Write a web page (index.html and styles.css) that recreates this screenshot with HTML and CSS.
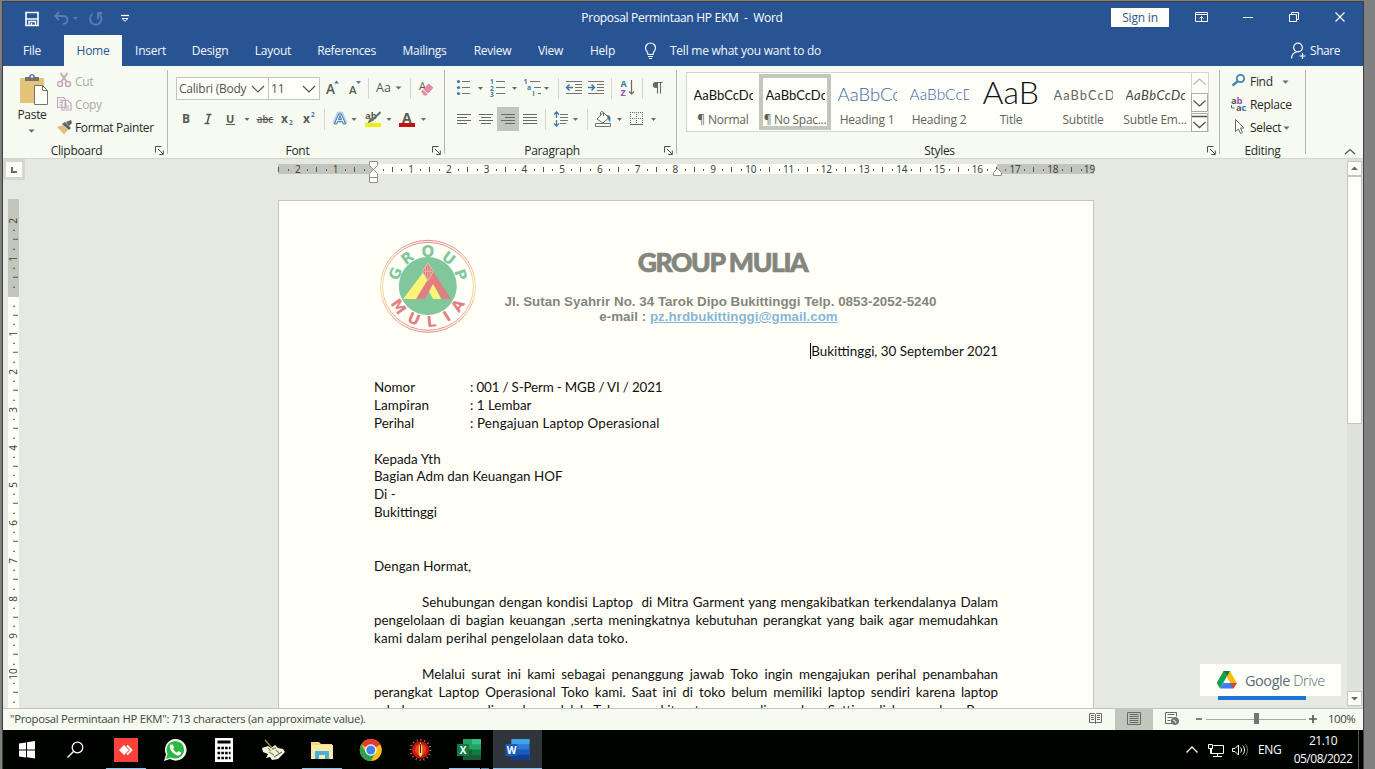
FILE: index.html
```html
<!DOCTYPE html>
<html lang="id">
<head>
<meta charset="utf-8">
<title>Proposal Permintaan HP EKM - Word</title>
<link rel="stylesheet" href="styles.css">
</head>
<body>
<svg width="0" height="0" class="defs" aria-hidden="true">
  <defs>
    <symbol id="caret" viewBox="0 0 7 4"><path d="M.5 .5h6L3.500 3.700z" fill="#666b63"/></symbol>
    <symbol id="launcher" viewBox="0 0 9 9"><path d="M.5 6.500v-6h6" fill="none" stroke="#4c504a"/><path d="M3 3l5 5M8.300 4.500v4h-4" fill="none" stroke="#4c504a"/></symbol>
  </defs>
</svg>
<div class="window">

  <header class="titlebar">
    <div class="quick">
      <svg width="130" height="32" viewBox="3 2 130 32" fill="none">
        <path d="M26 12.500h12v13H26z" stroke="#fff" stroke-width="1.600"/><path d="M26 19h12" stroke="#fff" stroke-width="1.500"/><path d="M29 25.500v-4h6.500v4M31.500 23v2" stroke="#fff" stroke-width="1.400"/>
        <g stroke="#5a7db3" stroke-width="1.800"><path d="M59 12l-4 4 4 4M55.500 16H63c3 0 4.500 1.500 4.500 3.800 0 2-1.500 4-4.500 4"/><path d="M92.500 14a5.800 5.800 0 1 0 6-.3M98 19v-6h4.500"/></g>
        <path d="M73 17h5l-2.500 3z" fill="#5a7db3"/>
        <path d="M121 15.500h8" stroke="#fff" stroke-width="1.300"/><path d="M122 18.500l3 2.800 3-2.800z" stroke="#fff"/>
      </svg>
    </div>
    <div class="doc-title">Proposal Permintaan HP EKM&nbsp; -&nbsp; Word</div>
    <div class="signin">Sign in</div>
    <svg class="winbtns" width="194" height="32" viewBox="1169 2 194 32" fill="none" stroke="#fff">
      <path d="M1195.500 12.500h12v9h-12zM1195.500 14.500h12" /><path d="M1201.500 21.500v-5M1199.500 18.500l2-2 2 2"/>
      <path d="M1243 17.500h10"/>
      <path d="M1289.500 14.500h7v7h-7zM1291.500 14.500v-2h7v7h-2"/>
      <path d="M1335.500 12.500l9 9M1344.500 12.500l-9 9" stroke-width="1.200"/>
    </svg>
  </header>

  <nav class="tabs">
    <span class="tab file">File</span><span class="tab home">Home</span><span class="tab insert">Insert</span><span class="tab design">Design</span><span class="tab layout">Layout</span><span class="tab refs">References</span><span class="tab mailings">Mailings</span><span class="tab review">Review</span><span class="tab view">View</span><span class="tab help">Help</span>
    <svg width="42" height="31" viewBox="628 35 42 31" fill="none" stroke="#fff" stroke-width="1.200"><path d="M648 54.500c0-3-2.500-3.500-2.500-6.500a5 5 0 0 1 10 0c0 3-2.500 3.500-2.500 6.500zM648 56.500h5M649 58.500h3"/></svg>
    <span class="tellme">Tell me what you want to do</span>
    <span class="share"><svg width="20" height="31" viewBox="1290 35 20 31" fill="none" stroke="#fff" stroke-width="1.200"><circle cx="1298" cy="47.500" r="4.300"/><path d="M1291.500 58.500c.3-4 2-6 5-6.500M1302.500 53v6M1299.500 56h6"/></svg>Share</span>
  </nav>

  <section class="ribbon">
    <div class="group clipboard">
      <div class="body">
        <div class="paste">
          <svg width="36" height="37" viewBox="14 70 36 37"><path d="M20 78h24v25H20z" fill="#e5c479"/><path d="M25 77h4c0-4 6-4 6 0h4v4H25z" fill="#70756e"/><circle cx="32" cy="76.500" r="1.300" fill="#f7faf1"/><path d="M34.500 85.500h8l5 5v14h-13z" fill="#fffffa" stroke="#70756e"/><path d="M42.500 85.500v5h5" fill="none" stroke="#70756e"/></svg>
          <span>Paste</span>
          <svg class="caret" width="7" height="4"><use href="#caret"/></svg>
        </div>
        <div class="clip-list">
          <div class="clip off"><svg width="18" height="23" viewBox="57 70 18 23" fill="none" stroke="#c4a9bb" stroke-width="1.500"><circle cx="60" cy="84" r="2.500"/><circle cx="68" cy="84" r="2.500"/><path d="M61 82l6.500-9M67 82l-6.500-9" stroke-width="2"/></svg>Cut</div>
          <div class="clip off"><svg width="18" height="23" viewBox="57 92 18 23" fill="#f7faf1" stroke="#c4a9bb" stroke-width="1.200"><path d="M57.500 96.500h6l2 2v8h-8zM62 99.500h6l3 3v6.500h-9z"/><path d="M59.500 99h3M59.500 101.500h2M59.500 104h2M64 103h3M64 105h5M64 107h5"/></svg>Copy</div>
          <div class="clip"><svg width="18" height="23" viewBox="57 115 18 23"><path d="M57 126l6-2 5 5-4 4.500z" fill="#e5bd80"/><path d="M62 123l3-2 6 6-2 2zM66 121l5-2 1 3-3 3z" fill="#5f645d"/></svg>Format Painter</div>
        </div>
      </div>
      <div class="label"><span>Clipboard</span><svg width="9" height="9"><use href="#launcher"/></svg></div>
    </div>

    <div class="group font">
      <div class="body rows">
        <div class="row">
          <div class="combo name"><span>Calibri (Body</span><svg width="14" height="8" viewBox="0 0 14 8"><path d="M1 1l6 6 6-6" fill="none" stroke="#50544d" stroke-width="1.200"/></svg></div>
          <div class="combo size"><span>11</span><svg width="14" height="8" viewBox="0 0 14 8"><path d="M1 1l6 6 6-6" fill="none" stroke="#50544d" stroke-width="1.200"/></svg></div>
          <svg width="23" height="24" viewBox="320 77 23 24"><text x="326" y="94" class="ico semi" font-size="13.500">A</text><path d="M334 83.500h5l-2.500-3z" fill="#4a7da3"/></svg>
          <svg width="22" height="24" viewBox="343 77 22 24"><text x="349" y="94" class="ico semi" font-size="11.500">A</text><path d="M356 81h5l-2.500 3z" fill="#4a7da3"/></svg>
          <svg width="7" height="24" viewBox="365 77 7 24"><path d="M368.500 78v21" stroke="#d3d6cd"/></svg>
          <svg width="34" height="24" viewBox="372 77 34 24"><text x="376" y="92" class="ico" font-size="12.500">Aa</text><path d="M395.500 86.500h6l-3 3z" fill="#666b63"/></svg>
          <svg width="8" height="24" viewBox="406 77 8 24"><path d="M410.500 78v21" stroke="#d3d6cd"/></svg>
          <svg width="24" height="24" viewBox="414 77 24 24"><text x="419" y="90" class="ico" font-size="11">A</text><path d="M421 91.500l7.500-8 5 4-7 8h-2.500z" fill="#e58ba3"/><path d="M423 89.500l5 4.500" stroke="#f7faf1"/></svg>
        </div>
        <div class="row">
          <svg width="21" height="24" viewBox="176 107 21 24"><text x="182" y="123" class="ico" font-size="12" font-weight="700">B</text></svg>
          <svg width="22" height="24" viewBox="197 107 22 24"><path d="M206.500 114.500h5M204.500 123.500h5M209.500 114.500l-2.500 9" fill="none" stroke="#555a53" stroke-width="1.500"/></svg>
          <svg width="21" height="24" viewBox="219 107 21 24"><text x="226" y="122.500" class="ico" font-size="11" font-weight="700">U</text><path d="M226 124.500h9" stroke="#555a53"/></svg>
          <svg width="15" height="24" viewBox="240 107 15 24"><path d="M244.500 118h5l-2.500 3z" fill="#666b63"/></svg>
          <svg width="22" height="24" viewBox="255 107 22 24"><text x="257" y="122.500" class="ico semi" font-size="10.500" textLength="16" lengthAdjust="spacingAndGlyphs">abc</text><path d="M256.500 119.500h17" stroke="#555a53"/></svg>
          <svg width="21" height="24" viewBox="277 107 21 24"><text x="281" y="123" class="ico" font-size="12" font-weight="700">x</text><text x="289" y="125" font-size="6.500" class="ico blue">2</text></svg>
          <svg width="22" height="24" viewBox="298 107 22 24"><text x="303" y="123" class="ico" font-size="12" font-weight="700">x</text><text x="311" y="117" font-size="6.500" class="ico blue">2</text></svg>
          <svg width="9" height="24" viewBox="320 107 9 24"><path d="M324.500 109v21" stroke="#d3d6cd"/></svg>
          <svg width="31" height="24" viewBox="329 107 31 24"><path d="M334.500 124l4.200-10h2.600l4.200 10M336.500 120.500h7" fill="none" stroke="#b4d0e6" stroke-width="4.500"/><path d="M334.500 124l4.200-10h2.600l4.200 10h-2.200l-1-2.700h-4.600l-1 2.700zM338.500 119.500h3l-1.500-4z" fill="#fffffa" stroke="#3a76ab"/><path d="M351.500 118h5l-2.500 3z" fill="#666b63"/></svg>
          <svg width="35" height="24" viewBox="360 107 35 24"><text x="365" y="118.500" class="ico" font-size="9.500" font-weight="700">ab</text><path d="M380.500 112l-8 8-3 1.500 1.500-3" fill="none" stroke="#666b63" stroke-width="2"/><path d="M365 123h16v4h-16z" fill="#eeee12"/><path d="M386.500 118h5l-2.500 3z" fill="#666b63"/></svg>
          <svg width="36" height="24" viewBox="395 107 36 24"><text x="402" y="122.500" class="ico" font-size="14" font-weight="700">A</text><path d="M399 123h16v4h-16z" fill="#c8100f"/><path d="M421 118h5l-2.500 3z" fill="#666b63"/></svg>
        </div>
      </div>
      <div class="label"><span>Font</span><svg width="9" height="9"><use href="#launcher"/></svg></div>
    </div>

    <div class="group para">
      <div class="body rows">
        <div class="row">
          <svg width="34" height="24" viewBox="453 77 34 24"><g fill="#3f79a6"><circle cx="458.500" cy="81.500" r="1.600"/><circle cx="458.500" cy="87.500" r="1.600"/><circle cx="458.500" cy="93.500" r="1.600"/></g><path d="M462 81.500h8M462 87.500h8M462 93.500h8" stroke="#70756e"/><path d="M478 87h5l-2.500 3z" fill="#666b63"/></svg>
          <svg width="34" height="24" viewBox="487 77 34 24"><g class="ico blue" font-size="6.500"><text x="490" y="84">1</text><text x="490" y="90.500">2</text><text x="490" y="97">3</text></g><path d="M496 81.500h9M496 87.500h9M496 93.500h9" stroke="#70756e"/><path d="M512 87h5l-2.500 3z" fill="#666b63"/></svg>
          <svg width="34" height="24" viewBox="521 77 34 24"><g class="ico blue" font-size="7"><text x="523.500" y="84">1</text><text x="527" y="90">a</text><text x="532.500" y="96">i</text></g><path d="M530 81.500h10M534 87.500h7M538 93.500h3" stroke="#70756e"/><path d="M544 87h5l-2.500 3z" fill="#666b63"/></svg>
          <svg width="7" height="24" viewBox="555 77 7 24"><path d="M558.500 78v21" stroke="#d3d6cd"/></svg>
          <svg width="23" height="24" viewBox="562 77 23 24"><path d="M566 81.500h16M575 84.500h7M575 87.500h7M575 90.500h7M566 93.500h16" stroke="#70756e"/><path d="M573 87.500h-6M569.500 84.500l-3 3 3 3" fill="none" stroke="#3f79a6" stroke-width="1.500"/></svg>
          <svg width="23" height="24" viewBox="585 77 23 24"><path d="M588 81.500h16M597 84.500h7M597 87.500h7M597 90.500h7M588 93.500h16" stroke="#70756e"/><path d="M588 87.500h6M591.500 84.500l3 3-3 3" fill="none" stroke="#3f79a6" stroke-width="1.500"/></svg>
          <svg width="7" height="24" viewBox="608 77 7 24"><path d="M611.500 78v21" stroke="#d3d6cd"/></svg>
          <svg width="24" height="24" viewBox="615 77 24 24"><text x="620.500" y="86.500" class="ico blue" font-size="9">A</text><text x="620.500" y="95.500" font-size="9" class="ico purple">Z</text><path d="M631.500 80v14M629 91.500l2.500 2.500 2.500-2.500" fill="none" stroke="#666b63" stroke-width="1.200"/></svg>
          <svg width="7" height="24" viewBox="639 77 7 24"><path d="M642.500 78v21" stroke="#d3d6cd"/></svg>
          <svg width="24" height="24" viewBox="646 77 24 24"><path d="M657 82h-1.200a3 3 0 0 0 0 6h1.200z" fill="#666b63"/><path d="M657.500 82v11.500M660.500 82v11.500M655 82.500h7.500" stroke="#666b63" fill="none" stroke-width="1.100"/></svg>
        </div>
        <div class="row">
          <svg width="22" height="24" viewBox="453 107 22 24"><path d="M457 114.500h14M457 117.500h10M457 120.500h14M457 123.500h10" stroke="#666b63"/></svg>
          <svg width="22" height="24" viewBox="475 107 22 24"><path d="M479 114.500h14M481 117.500h10M479 120.500h14M481 123.500h10" stroke="#666b63"/></svg>
          <svg class="on" width="22" height="24" viewBox="497 107 22 24"><path d="M501 114.500h14M505 117.500h10M501 120.500h14M505 123.500h10" stroke="#666b63"/></svg>
          <svg width="23" height="24" viewBox="519 107 23 24"><path d="M523 114.500h14M523 117.500h14M523 120.500h14M523 123.500h14" stroke="#666b63"/></svg>
          <svg width="7" height="24" viewBox="542 107 7 24"><path d="M545.500 109v21" stroke="#d3d6cd"/></svg>
          <svg width="34" height="24" viewBox="549 107 34 24"><path d="M556.500 112v6M556.500 120v6M554 114.500l2.500-2.500 2.500 2.500M554 123.500l2.500 2.500 2.500-2.500" fill="none" stroke="#3f79a6" stroke-width="1.300"/><path d="M560 114.500h8M560 117.500h8M560 120.500h8M560 123.500h6" stroke="#70756e"/><path d="M573 118h5l-2.500 3z" fill="#666b63"/></svg>
          <svg width="8" height="24" viewBox="583 107 8 24"><path d="M587.500 109v21" stroke="#d3d6cd"/></svg>
          <svg width="35" height="24" viewBox="591 107 35 24"><path d="M597 119l6-6.500 6 5-6 5.500z" fill="#fffffa" stroke="#666b63"/><path d="M600.500 116v-3c0-2 3-2 3 0v3" fill="none" stroke="#666b63"/><path d="M607 115c4 0 4 4 3 7-2-1-1-3-3-5z" fill="#3f79a6"/><path d="M595.500 123.500h15v3h-15z" fill="#fffffa" stroke="#70756e"/><path d="M617 118h5l-2.500 3z" fill="#666b63"/></svg>
          <svg width="35" height="24" viewBox="626 107 35 24"><path d="M630 112.500h13M630 118.500h13M630.500 112v13M636.500 112v13M642.500 112v13" stroke="#666b63" stroke-dasharray="1 1"/><path d="M630 124.500h13" stroke="#666b63"/><path d="M651 118h5l-2.500 3z" fill="#666b63"/></svg>
        </div>
      </div>
      <div class="label"><span>Paragraph</span><svg width="9" height="9"><use href="#launcher"/></svg></div>
    </div>

    <div class="group styles">
      <div class="body">
        <div class="gallery">
          <div class="style"><b class="sample">AaBbCcDc</b><span>¶ Normal</span></div>
          <div class="style selected"><b class="sample">AaBbCcDc</b><span>¶ No Spac...</span></div>
          <div class="style"><b class="sample h1">AaBbCc</b><span>Heading 1</span></div>
          <div class="style"><b class="sample h2">AaBbCcD</b><span>Heading 2</span></div>
          <div class="style"><b class="sample title">AaB</b><span>Title</span></div>
          <div class="style"><b class="sample sub">AaBbCcD</b><span>Subtitle</span></div>
          <div class="style"><b class="sample em">AaBbCcDc</b><span>Subtle Em...</span></div>
          <div class="spin">
            <svg width="17" height="20" viewBox="0 0 17 20" fill="none"><path d="M2.500 11.500l6-5.500 6 5.500" stroke="#b5b8b0" stroke-width="1.200"/></svg>
            <svg width="17" height="20" viewBox="0 0 17 20" fill="none"><path d="M.5.500h16v18H.5z" stroke="#abaea6"/><path d="M2.500 7.500l6 5.500 6-5.500" stroke="#50544d" stroke-width="1.200"/></svg>
            <svg width="17" height="20" viewBox="0 0 17 20" fill="none"><path d="M.5.500h16v18H.5z" stroke="#abaea6"/><path d="M1 3.500h15M2.500 9l6 5.500L14.500 9" stroke="#50544d" stroke-width="1.300"/></svg>
          </div>
        </div>
      </div>
      <div class="label"><span>Styles</span><svg width="9" height="9"><use href="#launcher"/></svg></div>
    </div>

    <div class="group editing">
      <div class="body">
        <div class="edit"><svg width="20" height="23" viewBox="1230 70 20 23" fill="none"><circle cx="1240.500" cy="78.500" r="3.700" stroke="#4383b5" stroke-width="1.800"/><path d="M1237.500 81.500l-5 4" stroke="#4383b5" stroke-width="2.500"/></svg><span>Find</span><svg class="c1" width="7" height="4"><use href="#caret"/></svg></div>
        <div class="edit"><svg width="20" height="23" viewBox="1230 92 20 23"><text x="1231" y="102.500" class="ico" font-size="9.500" font-weight="700">a<tspan class="purple">b</tspan></text><text x="1236" y="109.500" class="ico" font-size="9.500" font-weight="700">a<tspan class="blue">c</tspan></text><path d="M1231.500 104v3h3" fill="none" stroke="#3f79a6"/></svg><span>Replace</span></div>
        <div class="edit"><svg width="20" height="23" viewBox="1230 115 20 23"><path d="M1235.500 118.500v12l3-2.500 2 4.500 2-1-2-4.500h3.500z" fill="#fffffa" stroke="#666b63"/></svg><span>Select</span><svg class="c2" width="7" height="4"><use href="#caret"/></svg></div>
      </div>
      <div class="label"><span>Editing</span></div>
    </div>
    <svg class="collapse" width="12" height="7" viewBox="0 0 12 7"><path d="M1 6l5-4.500L11 6" fill="none" stroke="#50544d" stroke-width="1.200"/></svg>
  </section>

  <main class="workspace">
    <div class="canvas">
      <div class="ruler-row">
        <div class="tabstop"><div class="tabstop-in"><svg width="6" height="6" viewBox="0 0 6 6"><path d="M1 0v5h5" fill="none" stroke="#666b63" stroke-width="2"/></svg></div></div>
        <div class="hruler">
          <i>2</i><i>1</i><i></i><i>1</i><i>2</i><i>3</i><i>4</i><i>5</i><i>6</i><i>7</i><i>8</i><i>9</i><i>10</i><i>11</i><i>12</i><i>13</i><i>14</i><i>15</i><i>16</i><i>17</i><i>18</i><i class="last">19</i>
          <svg class="indent-l" width="10" height="23" viewBox="0 0 10 23"><path d="M.5.500h8v4l-4 4 4 4v4h-8v-4l4-4-4-4z" fill="#fffffa" stroke="#8d9189"/><path d="M.5 16.500h8v5h-8z" fill="#fffffa" stroke="#8d9189"/></svg>
          <svg class="indent-r" width="10" height="9" viewBox="0 0 10 9"><path d="M.5 7.500V4.500l4-4 4 4v3z" fill="#fffffa" stroke="#8d9189"/></svg>
        </div>
      </div>
      <div class="main-row">
        <div class="vruler"><i class="top">2</i><i>1</i><i></i><i>1</i><i>2</i><i>3</i><i>4</i><i>5</i><i>6</i><i>7</i><i>8</i><i>9</i><i>10</i><i></i></div>
        <article class="page">
          <div class="letterhead">
            <svg width="98" height="96" viewBox="379 238 98 96">
              <defs><linearGradient id="ring" x1="0" y1="0" x2="0" y2="1"><stop offset="0" stop-color="#e4888a"/><stop offset=".5" stop-color="#f5e29a"/><stop offset="1" stop-color="#e4888a"/></linearGradient></defs>
              <g fill="none" stroke="url(#ring)"><ellipse cx="428" cy="286.300" rx="47.500" ry="46" /><ellipse cx="428" cy="286.300" rx="45.500" ry="44"/></g>
              <circle cx="427.800" cy="286" r="29" fill="#80c79c"/>
              <path d="M403 299l22-29 5 6 11 23h-8l-5-9h-4l-6 9z" fill="#fbf478"/>
              <path d="M416 299l17-28 18 28h-9l-9-15-8 15z" fill="#df7f7f"/>
              <path d="M427.800 263l5.500 8.500-5.500 9-5.500-9z" fill="#df7f7f" stroke="#eec3b0"/><path d="M427.800 265v13M423.500 271.500h8.500M425.500 267.500v8M430 267.500v8" stroke="#f3c6bd" stroke-width=".6"/>
              <g class="badge-text" fill="#80c79c"><text x="427.800" y="256.500" transform="rotate(-69 427.800 286)">G</text><text x="427.800" y="256.500" transform="rotate(-36 427.800 286)">R</text><text x="427.800" y="256.500">O</text><text x="427.800" y="256.500" transform="rotate(37 427.800 286)">U</text><text x="427.800" y="256.500" transform="rotate(71 427.800 286)">P</text></g>
              <g class="badge-text" fill="#df8285"><text x="427.800" y="327" transform="rotate(55 427.800 286)">M</text><text x="427.800" y="327" transform="rotate(23 427.800 286)">U</text><text x="427.800" y="327" transform="rotate(-6 427.800 286)">L</text><text x="427.800" y="327" transform="rotate(-32 427.800 286)">I</text><text x="427.800" y="327" transform="rotate(-57 427.800 286)">A</text></g>
            </svg>
            <div class="company">
              <h1>GROUP MULIA</h1>
              <p class="addr">Jl. Sutan Syahrir No. 34 Tarok Dipo Bukittinggi Telp. 0853-2052-5240</p>
              <p class="email">e-mail : <a>pz.hrdbukittinggi@gmail.com</a></p>
            </div>
          </div>
          <p class="date"><span>Bukittinggi, 30 September 2021</span></p>
          <dl class="meta">
            <dt>Nomor</dt><dd class="number">: 001 / S-Perm - MGB / VI / 2021</dd>
            <dt class="wide">Lampiran</dt><dd>: 1 Lembar</dd>
            <dt>Perihal</dt><dd class="wide">: Pengajuan Laptop Operasional</dd>
          </dl>
          <p>Kepada Yth</p>
          <p>Bagian Adm dan Keuangan HOF</p>
          <p>Di -</p>
          <p>Bukittinggi</p>
          <p class="hail">Dengan Hormat,</p>
          <p class="full first">Sehubungan dengan kondisi Laptop&nbsp; di Mitra Garment yang mengakibatkan terkendalanya Dalam</p>
          <p class="full">pengelolaan di bagian keuangan ,serta meningkatnya kebutuhan perangkat yang baik agar memudahkan</p>
          <p class="full short">kami dalam perihal pengelolaan data toko.</p>
          <p class="full first second">Melalui surat ini kami sebagai penanggung jawab Toko ingin mengajukan perihal penambahan</p>
          <p class="full">perangkat Laptop Operasional Toko kami. Saat ini di toko belum memiliki laptop sendiri karena laptop</p>
          <p class="full">sebelumnya yang digunakan adalah Toko yang kita atas nama di gunakan Setting di laman akan Pasar</p>
        </article>
      </div>
    </div>
    <div class="scroll">
      <svg width="15" height="15" viewBox="0 0 15 15"><path d="M.5.500h14v14H.5z" fill="#fffffa" stroke="#c2c5bc"/><path d="M4 9h7L7.500 5.500z" fill="#666b63"/></svg>
      <div class="thumb"></div>
      <svg class="down" width="15" height="15" viewBox="0 0 15 15"><path d="M.5.500h14v14H.5z" fill="#fffffa" stroke="#c2c5bc"/><path d="M4 6h7L7.500 9.500z" fill="#666b63"/></svg>
    </div>
  </main>

  <footer class="status">
    <span class="msg">"Proposal Permintaan HP EKM": 713 characters (an approximate value).</span>
    <svg width="38" height="21" viewBox="1077 709 38 21" fill="none" stroke="#666b63"><path d="M1095.500 714.500v9M1089.500 713.500h5l1 1 1-1h5v9h-5l-1 1-1-1h-5z"/><path d="M1091 715.500h3M1091 717.500h3M1091 719.500h3M1097 715.500h3M1097 717.500h3M1097 719.500h3"/></svg>
    <svg class="on" width="38" height="21" viewBox="1115 709 38 21" fill="none" stroke="#666b63"><path d="M1127.500 712.500h13v12h-13z"/><path d="M1129.500 714.500h9M1129.500 716.500h9M1129.500 718.500h9M1129.500 720.500h9M1129.500 722.500h9"/></svg>
    <svg width="38" height="21" viewBox="1153 709 38 21" fill="none" stroke="#666b63"><path d="M1172 723.500h-6.500v-11h11v4"/><path d="M1167.500 714.500h7M1167.500 717.500h5M1167.500 720.500h3"/><circle cx="1175" cy="721" r="3.500" fill="#777b73"/><path d="M1173 720l2 1 1 2" stroke="#f7faf1"/></svg>
    <svg width="130" height="21" viewBox="1191 709 130 21" fill="none"><path d="M1196 719h6M1309 719h8M1313 715v8" stroke="#555a53" stroke-width="1.700"/><path d="M1206 719.500h100" stroke="#a5a8a0"/><path d="M1254 713h5v11h-5z" fill="#70756e"/></svg>
    <span class="pct">100%</span>
  </footer>

  <div class="taskbar">
    <svg width="48" height="39" viewBox="3 730 48 39"><path d="M19 743.500l7-1v7h-7zM27 742.300l8-1.300v8.500h-8zM19 750.500h7v7l-7-1zM27 750.500h8v8l-8-1.200z" fill="#fff"/></svg>
    <svg width="50" height="39" viewBox="51 730 50 39"><circle cx="77.500" cy="747.500" r="5.300" fill="none" stroke="#fff" stroke-width="1.300"/><path d="M73.500 751.500l-6 6" stroke="#fff" stroke-width="1.500"/></svg>
    <svg width="49" height="39" viewBox="101 730 49 39"><path d="M114 738h24v24h-24z" fill="#f9423a"/><path d="M119 750l5-5 5 5-5 5z" fill="#fff"/><path d="M127 745.500l4.500 4.500-4.500 4.500" fill="none" stroke="#fff" stroke-width="1.800"/><path d="M106 768h40v1h-40z" fill="#8fc3ea"/></svg>
    <svg width="49" height="39" viewBox="150 730 49 39"><path d="M164 761l2-6.500a10.800 10.800 0 1 1 4 4.500z" fill="#f2fbf3"/><circle cx="175.300" cy="749.800" r="8.800" fill="#2cb742"/><path d="M166 759l1.500-5 3.500 3.500z" fill="#2cb742"/><path d="M171 744.500l2 .2 1.200 2.700-1.200 1.400c1 2 2.200 3 4 3.800l1.500-1.500 2.600 1.400c.2 2.300-1.500 3-3.100 3-3.500-.6-7.800-4.500-8.300-8.500 0-1.300.6-2.300 1.300-2.500z" fill="#fff"/></svg>
    <svg width="49" height="39" viewBox="199 730 49 39"><path d="M215 738h18v24h-18z" fill="#fff"/><path d="M217.500 740.500h13v3h-13z" fill="#000"/><path d="M217.500 748h13M217.500 753h13M217.500 758h13" stroke="#000" stroke-width="2.600" stroke-dasharray="2.600 1.200"/></svg>
    <svg width="49" height="39" viewBox="248 730 49 39"><path d="M262 748l6-2 3 2 4-3 3 3 5 1 2 3-7 7-6 1-2-3-4 1 2-4-5-2z" fill="#f2f2e4"/><path d="M265 740l7 8M269 752l5 3M276 750l3 3M272 749l4-1M268 748l3 3" stroke="#9b9340" stroke-width="1.300"/><path d="M274 757l8-5" stroke="#000" stroke-width=".7"/></svg>
    <svg width="49" height="39" viewBox="297 730 49 39"><path d="M311 742h8l2 2h11v15h-21z" fill="#f7d778"/><path d="M311 745h22v14h-22z" fill="#fce9a6"/><path d="M315 759v-8h14v8h-4v-4h-6v4z" fill="#48b0dc"/><path d="M302 768h40v1h-40z" fill="#8fc3ea"/></svg>
    <svg width="49" height="39" viewBox="346 730 49 39"><circle cx="370.800" cy="750" r="11" fill="#fbc116"/><path d="M370.800 750L361.300 744.500a11 11 0 0 1 19 0z" fill="#e33b2e"/><path d="M370.800 744.500h9.500a11 11 0 0 1-9.500-5.500z" fill="#e33b2e"/><path d="M361.300 744.500a11 11 0 0 0 9.500 16.500l4.800-8.300-4.800 2.300-5-2.500z" fill="#2ba24c"/><circle cx="370.800" cy="750" r="5.800" fill="#fff"/><circle cx="370.800" cy="750" r="4.500" fill="#4082ed"/></svg>
    <svg width="49" height="39" viewBox="395 730 49 39"><circle cx="420.500" cy="750" r="10" fill="none" stroke="#e9695b" stroke-width="2" stroke-dasharray="1 2.900"/><circle cx="420.500" cy="750" r="8.500" fill="#c9150f"/><circle cx="420.500" cy="749.500" r="5.500" fill="#ee3f1d"/><path d="M420.500 742l1.800 5v8l-1.800 2-1.700-2v-8z" fill="#f8d84b"/><path d="M420.500 744v9" stroke="#461410"/></svg>
    <svg width="49" height="39" viewBox="444 730 49 39"><path d="M463 739h18v21h-18z" fill="#21a366"/><path d="M472 739h9v5.300h-9z" fill="#33c481"/><path d="M463 749.500h9v10.500h-9z" fill="#185c37"/><path d="M472 749.500h9v5h-9z" fill="#107c41"/><path d="M472 754.500h9v5.500h-9z" fill="#185c37"/><path d="M457 744h12v12h-12z" fill="#107c41"/><text x="463" y="754" class="app">X</text><path d="M449 768h31v1h-31z" fill="#8fc3ea"/><path d="M481 768h8v1h-8z" fill="#5d88a9"/></svg>
    <svg class="active" width="49" height="39" viewBox="493.500 730 49 39"><path d="M512 739h18v21h-18z" fill="#2b7cd3"/><path d="M512 739h18v5.300h-18z" fill="#41a5ee"/><path d="M512 749.500h18v5h-18z" fill="#185abd"/><path d="M512 754.500h18v5.500h-18z" fill="#103f91"/><path d="M506 744h12v12h-12z" fill="#185abd"/><text x="512" y="754" class="app">W</text><path d="M493 768h50v1h-50z" fill="#8fc3ea"/></svg>
    <div class="tray">
      <svg width="73" height="39" viewBox="1180 730 73 39" fill="none" stroke="#fff"><path d="M1186.500 752.500l5.500-5.500 5.500 5.500" stroke-width="1.300"/><path d="M1213.500 745.500h10v8h-12v-5M1217.500 753.500v3M1213 756.500h9"/><path d="M1208.500 744.500h4v4h-4zM1210.500 748.500v5h2"/><path d="M1232.500 748.500h2.500l3.500-3.500v10l-3.500-3.500h-2.500zM1240.500 747.500c1.300 1.500 1.300 3.500 0 5M1242.800 745.500c2.300 2.800 2.300 6.200 0 9"/><path d="M1245.500 744c2.600 3.500 2.600 8.500 0 12" stroke="#777"/></svg>
      <span class="lang">ENG</span>
      <span class="clock"><span>21.10</span><span>05/08/2022</span></span>
      <span class="peek"></span>
    </div>
  </div>

  <div class="drive-badge">
    <div class="drive-card">
      <svg width="22" height="20" viewBox="1216 670 22 20"><path d="M1223.500 671h6.500l-10 17.500-3.300-5.500z" fill="#12a152"/><path d="M1230 671l6.800 12h-6.500l-6.800-12z" fill="#fbb90b"/><path d="M1223.500 671h6.500l-3.200 5.500z" fill="#0a7d3c"/><path d="M1220 688.500l3.300-5.500h13.500l-3.300 5.500z" fill="#3d7ff0"/><path d="M1230.300 683h6.500l-3.300 5.500z" fill="#e5402f"/></svg>
      <span><em>Google</em> Drive</span>
    </div>
    <div class="drive-bar"></div>
  </div>
</div>
</body>
</html>
```
FILE: styles.css
```css
* { box-sizing: border-box; }
body {
  margin: 0;
  width: 1375px;
  height: 769px;
  overflow: hidden;
  background: #808080;
  font-family: "Open Sans", "Noto Sans", sans-serif;
  font-size: 12px;
  color: #262925;
}
svg { display: block; flex: none; }
.defs { position: absolute; }
p, h1, dl, dd { margin: 0; }

.window {
  position: relative;
  width: 1362px;
  height: 768px;
  margin: 1px 0 0 2px;
  border: 1px solid #3c3f3c;
  border-bottom: 0;
  display: flex;
  flex-direction: column;
}

/* title bar */
.titlebar { height: 33px; background: #295494; color: #fff; display: flex; flex: none; }
.quick { width: 464px; }
.doc-title { width: 430px; text-align: center; line-height: 32px; letter-spacing: -0.3px; white-space: pre; }
.signin { width: 58px; height: 19px; margin: 6px 0 0 214px; background: #fffffa; color: #295494; text-align: center; line-height: 19px; letter-spacing: -0.2px; }

.tabs { height: 31px; background: #295494; color: #f4f8f8; display: flex; flex: none; line-height: 31px; letter-spacing: -0.25px; }
.tab { text-align: center; flex: none; }
.file { width: 58px; margin-right: 3px; }
.home { width: 58px; background: #f7faf1; color: #295494; }
.insert { width: 57px; }
.design { width: 62px; }
.layout { width: 64px; }
.refs { width: 83px; letter-spacing: -0.35px; }
.mailings { width: 73px; }
.review { width: 63px; }
.view { width: 53px; }
.help { width: 51px; }
.tellme { width: 620px; white-space: nowrap; }
.share { display: flex; letter-spacing: -0.45px; }

/* ribbon */
.ribbon { height: 93px; background: #f7faf1; border-bottom: 1px solid #d3d6cd; display: flex; flex: none; padding-top: 4px; }
.group { height: 84px; border-right: 1px solid #b5b8b0; flex: none; }
.clipboard { width: 165px; }
.font { width: 277px; }
.para { width: 232px; }
.styles { width: 543px; }
.editing { width: 86px; }
.body { height: 72px; display: flex; }
.label { height: 16px; display: grid; grid-template-columns: 1fr 17px; align-items: center; justify-items: center; letter-spacing: -0.3px; }
.label svg { margin-left: 2px; }
.editing .label { grid-template-columns: 1fr; }

.paste { width: 36px; margin-left: 11px; display: flex; flex-direction: column; align-items: center; letter-spacing: -0.3px; }
.paste span { line-height: 16px; }
.paste .caret { margin: 6px 1px 0 0; }
.clip-list { margin-left: 7px; }
.clip { height: 23px; display: flex; align-items: center; letter-spacing: -0.35px; white-space: nowrap; line-height: 22px; }
.off { color: #a9ada5; }

.rows { flex-direction: column; padding: 7px 0 0 8px; gap: 6px; }
.row { display: flex; height: 24px; flex: none; }
.para .row .on { background: #c3c6bd; }
.combo { height: 23px; border: 1px solid #c3c6bd; background: #fffffa; display: flex; align-items: center; justify-content: space-between; padding: 0 3px 0 2px; color: #50544d; white-space: nowrap; }
.name { width: 93px; letter-spacing: -0.25px; }
.size { width: 51px; border-left: 0; }
.ico { fill: #555a53; font-family: "Open Sans", sans-serif; }
.semi { font-weight: 600; }
.blue { fill: #3f79a6; font-weight: 700; }
.purple { fill: #9a55b5; font-weight: 700; }

.gallery { width: 523px; height: 60px; margin: 2px 0 0 9px; border: 1px solid #d3d6cd; background: #fffffa; display: flex; }
.style { width: 72px; height: 58px; display: flex; flex-direction: column; align-items: center; color: #5e625b; letter-spacing: -0.2px; white-space: nowrap; }
.style span { line-height: 19px; }
.selected { box-shadow: inset 0 0 0 4px #c3c6bd; height: 56px; margin-top: 1px; letter-spacing: -0.3px; }
.selected .sample { height: 36px; line-height: 42px; }
.sample { width: 59px; height: 37px; overflow: hidden; display: block; font: 400 13px/44px Lato, sans-serif; color: #111; letter-spacing: 0; }
.h1 { font-size: 18.500px; color: #4067a5; font-weight: 300; line-height: 43px; }
.h2 { font-size: 15.500px; color: #4067a5; font-weight: 300; line-height: 43px; }
.title { font-size: 32px; font-weight: 300; height: 29px; margin-top: 8px; line-height: 21px; width: 57px; }
.sub { color: #62665f; letter-spacing: 1.1px; font-size: 12.800px; }
.em { font-style: italic; color: #444; letter-spacing: .45px; }
.spin { width: 17px; border-left: 1px solid #d3d6cd; }
.spin svg { margin-left: -1px; }

.editing .body { flex-direction: column; padding-left: 10px; }
.edit { height: 23px; display: flex; align-items: center; letter-spacing: -0.3px; line-height: 22px; }
.c1 { margin-left: 9px; }
.c2 { margin-left: 2px; }
.collapse { margin: 78px 0 0 38px; }

/* workspace */
.workspace { height: 549px; background: #e6e9e1; display: flex; flex: none; }
.canvas { width: 1344px; overflow: hidden; }
.ruler-row { height: 40px; display: flex; }
.tabstop { width: 22px; height: 21px; background: #d5d8cf; padding: 3px; }
.tabstop-in { width: 16px; height: 15px; background: #fffffa; display: flex; align-items: center; justify-content: center; }
.hruler {
  position: relative;
  width: 816px;
  height: 10px;
  margin: 5px 0 0 253px;
  padding-left: 1px;
  display: flex;
  background:
    linear-gradient(#555, #555) 0 3px / 1px 5px no-repeat,
    linear-gradient(90deg, #c3c6bd 96px, #fffffa 96px 719px, #c3c6bd 719px);
}
.hruler i, .vruler i { font: normal 10px/10px "Noto Sans", sans-serif; color: #40443e; flex: none; text-align: center; }
.hruler i {
  width: 37.750px;
  background:
    linear-gradient(#555, #555) 9px 5px / 1px 2px no-repeat,
    linear-gradient(#555, #555) 28px 5px / 1px 2px no-repeat,
    linear-gradient(#555, #555) 37px 3px / 1px 5px no-repeat;
}
.hruler .last { width: 24px; padding-left: 12px; background: linear-gradient(#555, #555) 9px 5px / 1px 2px no-repeat; text-align: left; }
.indent-l { position: absolute; left: 91px; top: -3px; }
.indent-r { position: absolute; left: 715px; top: 4px; }
.main-row { height: 509px; overflow: hidden; display: flex; }
.vruler { width: 11px; height: 509px; margin-left: 5px; padding-top: 3px; overflow: hidden; background: linear-gradient(#c3c6bd 98px, #fffffa 98px); flex: none; }
.vruler i {
  display: block;
  width: 11px;
  height: 37.750px;
  writing-mode: vertical-rl;
  transform: rotate(180deg);
  line-height: 11px;
  background:
    linear-gradient(#555, #555) 4px 9px / 2px 1px no-repeat,
    linear-gradient(#555, #555) 4px 28px / 2px 1px no-repeat,
    linear-gradient(#555, #555) 1px 0 / 5px 1px no-repeat;
}
.vruler .top {
  background:
    linear-gradient(#555, #555) 4px 9px / 2px 1px no-repeat,
    linear-gradient(#555, #555) 1px 0 / 5px 1px no-repeat;
}

/* document */
.page {
  width: 816px;
  height: 600px;
  margin: 1px 0 0 259px;
  padding: 37px 95px 0;
  border: 1px solid #c3c6bd;
  background: #fffff8;
  color: #111;
  font: 13.400px/17.940px Lato, sans-serif;
  flex: none;
}
.page p { white-space: nowrap; }
.letterhead { height: 104.800px; display: flex; padding-left: 5px; }
.badge-text { font: 700 15px "DejaVu Sans", sans-serif; text-anchor: middle; }
.company { width: 486px; text-align: center; color: #83867d; font: 700 13.330px/15px "Liberation Sans", Arial, sans-serif; letter-spacing: 0.03px; }
.company h1 { font: 900 26.500px/30px Lato, sans-serif; letter-spacing: -1.4px; margin: 9px 0 17px 5px; -webkit-text-stroke: 0.700px #83867d; }
.company .addr { padding-left: 1px; }
.company .email { padding-right: 3px; }
.company a { color: #86b6d6; text-decoration: underline; }
.date { text-align: right; margin-bottom: 18px; }
.date span { border-left: 1px solid #000; }
.meta { display: grid; grid-template-columns: 96px 1fr; margin-bottom: 18px; }
.number { letter-spacing: -0.17px; }
.wide { letter-spacing: 0.13px; }
.hail { margin: 36px 0 18px; }
.page .full { text-align: justify; text-align-last: justify; white-space: normal; height: 17.940px; overflow: visible; width: 624px; }
.page .first { padding-left: 48px; }
.page .second { margin-top: 18px; }
.page .short { width: 254px; letter-spacing: 0.18px; white-space: nowrap; }

.scroll { width: 16px; padding-top: 2px; background: #dfe2d9; display: flex; flex-direction: column; height: 549px; }
.thumb { width: 15px; height: 248px; background: #fffffa; border: 1px solid #c2c5bc; }
.down { margin-top: auto; margin-bottom: 2px; }

/* status bar */
.status { height: 22px; border-top: 1px solid #c3c6bd; background: #f7faf1; display: flex; flex: none; color: #40443e; line-height: 20px; }
.msg { width: 1074px; padding-left: 7px; font-size: 11.300px; letter-spacing: -0.28px; }
.status .on { background: #c3c6bd; }
.pct { margin-left: 7px; font-size: 11.500px; letter-spacing: -0.5px; line-height: 19px; }

/* taskbar */
.taskbar { height: 39px; background: #000300; display: flex; color: #fff; flex: none; }
.active { background: #30343b; }
.app { font: 700 10px "Open Sans", sans-serif; fill: #fff; text-anchor: middle; }
.tray { margin-left: auto; display: flex; line-height: 39px; }
.lang { width: 39px; padding-left: 5px; letter-spacing: -0.4px; }
.clock { width: 62px; display: flex; flex-direction: column; text-align: center; line-height: 18px; padding-top: 2px; letter-spacing: -0.5px; }
.peek { width: 5px; margin-left: 4px; border-left: 1px solid #555; }

/* floating drive badge */
.drive-badge { position: absolute; left: 1197px; top: 662px; width: 141px; }
.drive-card { height: 32px; background: #fffffa; display: flex; align-items: center; gap: 7px; padding-left: 16px; color: #5b6b76; font-size: 14.500px; letter-spacing: -0.45px; font-weight: 300; }
.drive-card em { font-style: normal; font-weight: 400; }
.drive-bar { width: 88px; height: 4px; margin-left: 18px; background: #1f72dc; }
```
